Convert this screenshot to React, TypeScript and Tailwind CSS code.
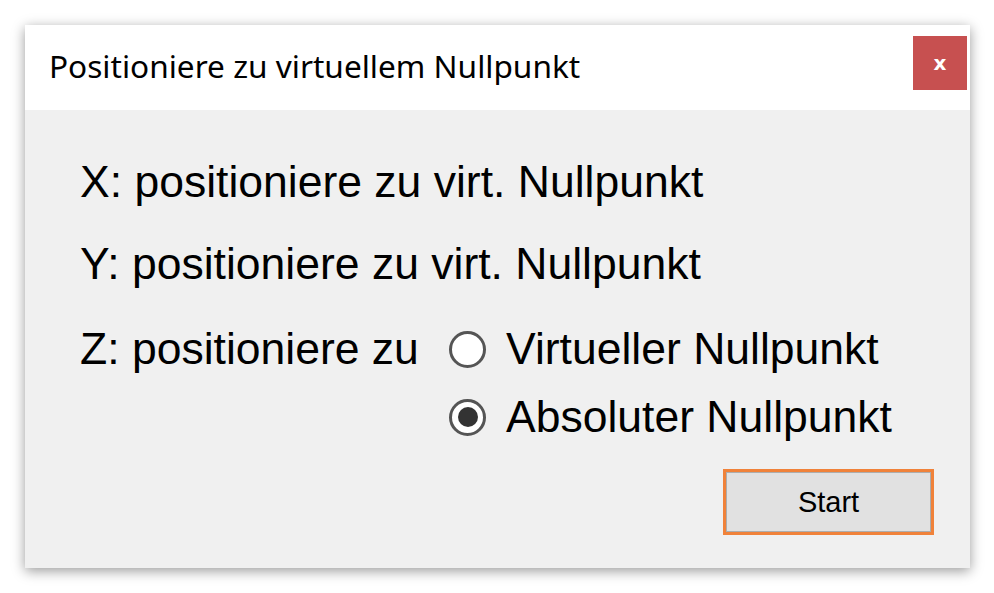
import React, { useState } from 'react';

const Radio: React.FC<{ checked: boolean; label: string; onSelect: () => void }> = ({ checked, label, onSelect }) => (
    <button type="button" onClick={onSelect} className="flex items-center h-[68px] leading-[68px] text-left">
        <span className="flex items-center justify-center w-[37px] h-[37px] rounded-full border-[3px] border-[#555555] bg-white shrink-0">
            {checked && <span className="block w-[20px] h-[20px] rounded-full bg-[#333333]" />}
        </span>
        <span className="ml-[20px]">{label}</span>
    </button>
);

const App: React.FC = () => {
    const [zMode, setZMode] = useState<'virtual' | 'absolute'>('absolute');

    return (
        <div className="w-[994px] h-[593px] bg-white pt-[25px] pl-[25px]">
            <div className="w-[945px] h-[543px] flex flex-col bg-[#f0f0f0] shadow-[0_3px_12px_rgba(0,0,0,0.4)]">
                {/* title bar */}
                <div className="flex items-center justify-between h-[85px] bg-white pl-[24px] pr-[3px]">
                    <span className="text-[31.6px] text-black font-['Noto_Sans',sans-serif] mt-[-4px]">
                        Positioniere zu virtuellem Nullpunkt
                    </span>
                    <button
                        className="w-[54px] h-[54px] mb-[9px] bg-[#c75050] text-white text-[20px] font-bold flex items-center justify-center font-['DejaVu_Sans',sans-serif]"
                        aria-label="Close"
                    >
                        x
                    </button>
                </div>

                {/* body */}
                <div className="flex flex-col pl-[55px] pt-[31px] text-[44.5px] text-black font-['Liberation_Sans',Arial,sans-serif]">
                    <div className="leading-[82px] h-[82px]">X: positioniere zu virt. Nullpunkt</div>
                    <div className="leading-[82px] h-[82px]">Y: positioniere zu virt. Nullpunkt</div>
                    <div className="flex mt-[10px]">
                        <div className="w-[369px] h-[68px] leading-[68px]">Z: positioniere zu</div>
                        <div className="flex flex-col">
                            <Radio checked={zMode === 'virtual'} label="Virtueller Nullpunkt" onSelect={() => setZMode('virtual')} />
                            <Radio checked={zMode === 'absolute'} label="Absoluter Nullpunkt" onSelect={() => setZMode('absolute')} />
                        </div>
                    </div>
                    <div className="flex justify-end pr-[36px] mt-[18px]">
                        <button className="w-[211px] h-[66px] border-[3px] border-[#f0823a] p-0">
                            <span className="flex items-center justify-center w-full h-full border border-[#adadad] bg-[#e1e1e1] text-[29px] leading-none">
                                Start
                            </span>
                        </button>
                    </div>
                </div>
            </div>
        </div>
    );
};

export default App;
